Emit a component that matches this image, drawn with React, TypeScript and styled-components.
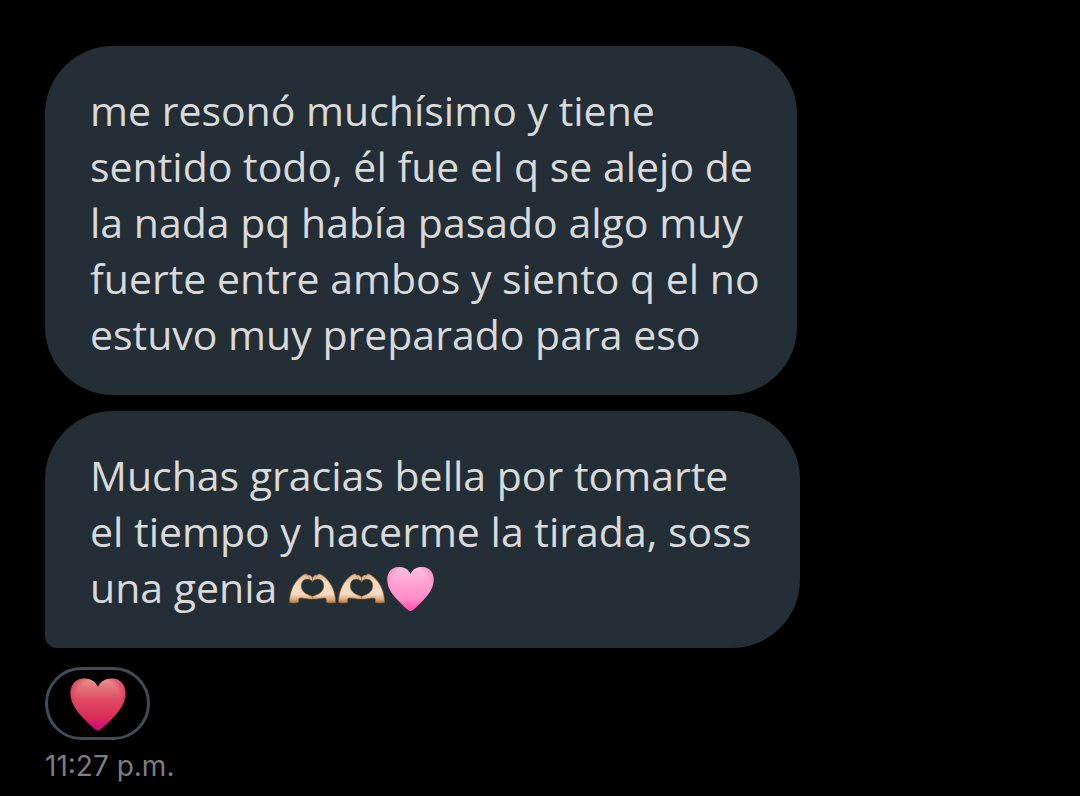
import React, { useId } from "react";
import styled, { createGlobalStyle } from "styled-components";

const GlobalStyle = createGlobalStyle`
  * { box-sizing: border-box; }
  body {
    margin: 0;
    background: #000;
    color: #d9d9d9;
    font-family: "Open Sans", "Noto Sans", sans-serif;
  }
`;

const Conversation = styled.main`
  display: flex;
  flex-direction: column;
  align-items: flex-start;
  padding: 46px 45px 0;
`;

const Bubble = styled.p<{ $last?: boolean }>`
  margin: 0 0 ${(p) => (p.$last ? 19 : 16)}px;
  padding: 36px ${(p) => (p.$last ? 49 : 37)}px 33px 45px;
  border-radius: ${(p) => (p.$last ? "68px 68px 68px 12px" : "68px")};
  background: #242e36;
  font-size: 41px;
  line-height: 56px;
  white-space: nowrap;
`;

const Emoji = styled.svg<{ $size: number }>`
  display: inline-block;
  width: ${(p) => p.$size}px;
  height: ${(p) => p.$size}px;
  vertical-align: -10px;
`;

const Reaction = styled.button`
  display: flex;
  align-items: center;
  justify-content: center;
  width: 105px;
  height: 73px;
  padding: 0;
  border: 3px solid #3d4d59;
  border-radius: 37px;
  background: #000;
`;

const Time = styled.time`
  margin-top: 6px;
  color: #7b7e84;
  font-family: "Inter", "Open Sans", sans-serif;
  font-size: 28px;
  line-height: 40px;
`;

const HEART =
  "M24.500 47C23 47 19 43.500 14 38.500C6 30.500 1.300 24 1.300 15.500C1.300 8 6 3 13 3C18.500 3 22.500 5.500 24.500 10C26.500 5.500 30.500 3 36 3C43 3 47.700 8 47.700 15.500C47.700 24 43 30.500 35 38.500C30 43.500 26 47 24.500 47Z";

type HeartProps = { size: number; colors: string[]; edge: string; label: string };

function Heart({ size, colors, edge, label }: HeartProps) {
  const id = useId();
  return (
    <Emoji $size={size} viewBox="0 0 49 49" role="img" aria-label={label}>
      <defs>
        <linearGradient id={`${id}fill`} x1="0" y1="0" x2="0" y2="1">
          <stop offset="0" stopColor={colors[0]} />
          <stop offset="0.4" stopColor={colors[1]} />
          <stop offset="0.75" stopColor={colors[2]} />
          <stop offset="1" stopColor={colors[3]} />
        </linearGradient>
        <radialGradient id={`${id}edge`} cx="0.5" cy="0.42" r="0.58">
          <stop offset="0.7" stopColor={edge} stopOpacity="0" />
          <stop offset="1" stopColor={edge} stopOpacity="0.7" />
        </radialGradient>
      </defs>
      <path d={HEART} fill={`url(#${id}fill)`} />
      <path d={HEART} fill={`url(#${id}edge)`} />
    </Emoji>
  );
}

const HAND =
  "M1.500 38.500C1.500 31 3.500 24 7.500 18.500C10 15 13.500 11.500 16.500 10.300C18 9.800 19.200 10.200 19.800 11.200C21.800 10.500 23.800 12.200 24.500 14.500L24.500 17.800C22.500 14.500 16.500 13.800 14.200 18C11.800 22.500 14 27.500 18.500 30L24.500 32.600L24.500 35C20.500 35.500 15 33.500 11.500 34C10.500 35 10.500 36.500 10.500 38.500Q6 39.500 1.500 38.500Z";

function HeartHands() {
  const id = useId();
  return (
    <Emoji $size={49} viewBox="0 0 49 49" role="img" aria-label="manos formando un corazón">
      <defs>
        <linearGradient id={id} x1="0" y1="0" x2="0" y2="1">
          <stop offset="0" stopColor="#dfb48c" />
          <stop offset="0.3" stopColor="#f5dac1" />
          <stop offset="0.7" stopColor="#f5d9bf" />
          <stop offset="0.88" stopColor="#d8a97c" />
          <stop offset="1" stopColor="#b27542" />
        </linearGradient>
      </defs>
      <g fill={`url(#${id})`} stroke="#94602f" strokeWidth="0.7" strokeLinejoin="round">
        <path d={HAND} />
        <path d={HAND} transform="matrix(-1 0 0 1 49 0)" />
      </g>
      <g fill="none" stroke="#b98253" strokeWidth="0.8" strokeLinecap="round">
        <path d="M19.500 11.500Q21.500 13 22 15M29.500 11.500Q27.500 13 27 15M24.500 32.500V34.500" />
      </g>
    </Emoji>
  );
}

export default function App() {
  return (
    <>
      <GlobalStyle />
      <Conversation>
        <Bubble>
          me resonó muchísimo y tiene
          <br />
          sentido todo, él fue el q se alejo de
          <br />
          la nada pq había pasado algo muy
          <br />
          fuerte entre ambos y siento q el no
          <br />
          estuvo muy preparado para eso
        </Bubble>
        <Bubble $last>
          Muchas gracias bella por tomarte
          <br />
          el tiempo y hacerme la tirada, soss
          <br />
          una genia <HeartHands />
          <HeartHands />
          <Heart
            size={49}
            colors={["#ffc0df", "#ff9fd3", "#ff8bc9", "#fb3f9d"]}
            edge="#ff6fb8"
            label="corazón rosa"
          />
        </Bubble>
        <Reaction type="button" aria-label="Reacción: corazón">
          <Heart
            size={58}
            colors={["#e99490", "#de4a62", "#d92e55", "#c9009a"]}
            edge="#d6184f"
            label="corazón rojo"
          />
        </Reaction>
        <Time dateTime="23:27">11:27 p.m.</Time>
      </Conversation>
    </>
  );
}
